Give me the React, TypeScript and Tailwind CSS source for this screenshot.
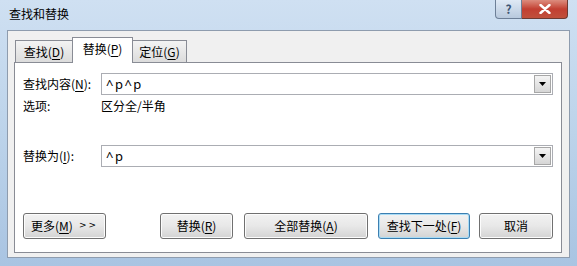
import React from "react";

const F = { fontFamily: '"Noto Sans CJK SC", "Noto Sans", sans-serif' };

function U({ c }: { c: string }) {
  return <span className="underline underline-offset-[2px]">{c}</span>;
}

function Combo({ value }: { value: string }) {
  return (
    <div className="flex h-[22px] w-[452px] items-center border border-[#abadb3] bg-white pl-[4px] pr-[1px]">
      <span className="flex-1 text-[13px] leading-none tracking-[1.5px] text-black" style={{ fontFamily: '"Noto Sans", sans-serif' }}>
        {value}
      </span>
      <div className="flex h-[18px] w-[17px] items-center justify-center border border-[#a7a7a7] bg-gradient-to-b from-[#f4f4f4] to-[#d6d6d6]">
        <svg width="7" height="4" viewBox="0 0 7 4">
          <path d="M0 0 H7 L3.5 4 Z" fill="#000" />
        </svg>
      </div>
    </div>
  );
}

function Btn({ children, w, def }: { children: React.ReactNode; w: string; def?: boolean }) {
  return (
    <div
      className={`flex h-[26px] ${w} items-center justify-center rounded-[3px] border ${
        def ? "border-[#3c7fb1] shadow-[inset_0_0_0_1px_#a9dcf6]" : "border-[#707070] shadow-[inset_0_0_0_1px_#fcfcfc]"
      } bg-gradient-to-b from-[#f2f2f2] via-[#e8e8e8] to-[#d3d3d3] text-[12px] text-black`}
    >
      {children}
    </div>
  );
}

export default function App() {
  return (
    <div
      className="flex h-[266px] w-[577px] flex-col overflow-hidden bg-gradient-to-b from-[#cfe0f2] via-[#bcd3ea] to-[#a9c4e2] text-black"
      style={F}
    >
      {/* title bar */}
      <div className="flex h-[30px] shrink-0 items-start justify-between">
        <div className="pl-[9px] pt-[6px] text-[12px] leading-[16px]">查找和替换</div>
        <div className="mr-[9px] flex">
          <div className="flex h-[19px] w-[27px] items-center justify-center rounded-bl-[4px] border border-t-0 border-[#6d7f97] bg-gradient-to-b from-[#dfe9f5] to-[#b8c9dd] text-[12px] font-bold leading-none text-[#3d5574]">
            ?
          </div>
          <div className="flex h-[19px] w-[46px] items-center justify-center rounded-br-[4px] border border-l-0 border-t-0 border-[#6d3a32] bg-gradient-to-b from-[#dc8c7e] via-[#c23f32] to-[#c0503c]">
            <svg width="12" height="10" viewBox="0 0 12 10">
              <path d="M1.5 1 L10.5 9 M10.5 1 L1.5 9" stroke="#fff" strokeWidth="2.4" strokeLinecap="round" />
            </svg>
          </div>
        </div>
      </div>

      {/* client */}
      <div className="mx-[7px] mb-[8px] flex flex-1 flex-col border border-[#8e9cae] bg-[#f0f0f0]">
        {/* tabs */}
        <div className="flex h-[31px] items-end pl-[7px]">
          <div className="mb-[-1px] flex h-[23px] w-[58px] items-center justify-center border border-[#898c95] bg-gradient-to-b from-[#f3f3f3] to-[#dcdcdc] text-[12px]">
            查找(<U c="D" />)
          </div>
          <div className="relative z-10 mb-[-1px] ml-[-1px] flex h-[26px] w-[61px] items-center justify-center border border-b-0 border-[#898c95] bg-white pb-[3px] text-[12px]">
            替换(<U c="P" />)
          </div>
          <div className="mb-[-1px] ml-[-1px] flex h-[23px] w-[55px] items-center justify-center border border-[#898c95] bg-gradient-to-b from-[#f3f3f3] to-[#dcdcdc] text-[12px]">
            定位(<U c="G" />)
          </div>
        </div>

        {/* panel */}
        <div className="ml-[6px] mr-[7px] flex h-[191px] flex-col border border-[#898c95] bg-white pl-[8px] pt-[10px] text-[12px]">
          <div className="flex items-center">
            <div className="w-[78px]">
              查找内容(<U c="N" />):
            </div>
            <Combo value="^p^p" />
          </div>
          <div className="mt-[3px] flex h-[16px] items-center">
            <div className="w-[78px]">选项:</div>
            <div>区分全/半角</div>
          </div>
          <div className="mt-[31px] flex items-center">
            <div className="w-[78px]">
              替换为(<U c="I" />):
            </div>
            <Combo value="^p" />
          </div>
          <div className="mt-[46px] flex items-center">
            <Btn w="w-[83px]">
              <span className="pr-[6px]">
                更多(<U c="M" />)
              </span>
              <span style={{ fontFamily: '"DejaVu Sans", sans-serif' }} className="text-[9px] tracking-[2px]">
                &gt;&gt;
              </span>
            </Btn>
            <div className="ml-[54px]">
              <Btn w="w-[73px]">
                替换(<U c="R" />)
              </Btn>
            </div>
            <div className="ml-[11px]">
              <Btn w="w-[124px]">
                全部替换(<U c="A" />)
              </Btn>
            </div>
            <div className="ml-[10px]">
              <Btn w="w-[92px]" def>
                查找下一处(<U c="F" />)
              </Btn>
            </div>
            <div className="ml-[9px]">
              <Btn w="w-[74px]">取消</Btn>
            </div>
          </div>
        </div>
      </div>
    </div>
  );
}
